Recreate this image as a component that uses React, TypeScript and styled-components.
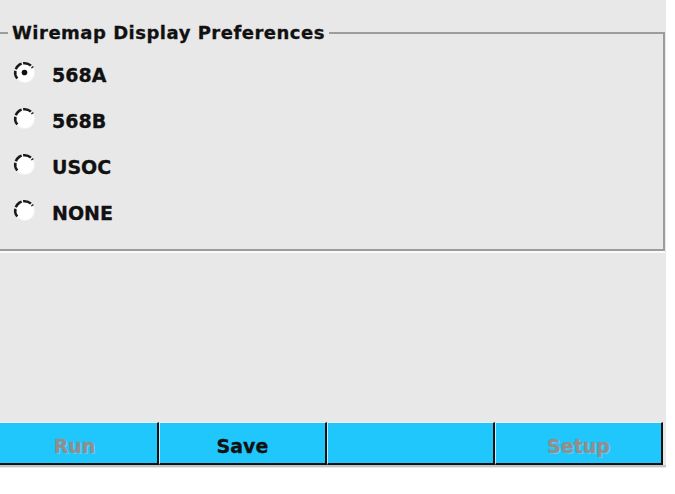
import React, { useState } from "react";
import styled, { createGlobalStyle } from "styled-components";

const GlobalStyle = createGlobalStyle`
  html, body {
    margin: 0;
    padding: 0;
    background: #ffffff;
  }
  body {
    font-family: "DejaVu Sans", "Liberation Sans", sans-serif;
    overflow: hidden;
  }
`;

const Screen = styled.div`
  width: 666px;
  height: 468px;
  background: #e8e8e8;
  display: flex;
  flex-direction: column;
  overflow: hidden;
`;

const Group = styled.fieldset`
  box-sizing: border-box;
  width: 685px;
  height: 229px;
  margin: 22px 0 0 -20px;
  padding: 8px 0 0 31px;
  border: 2px solid #9c9c9c;
  min-inline-size: 0;
  box-shadow: 0 2px 0 #fafafa;
`;

const Legend = styled.legend`
  margin-left: -5px;
  padding: 0 4px;
  font-size: 18px;
  line-height: 22px;
  font-weight: bold;
  letter-spacing: 0.5px;
  color: #111111;
  -webkit-text-stroke: 0.3px #111111;
`;

const OptionRow = styled.label`
  display: flex;
  align-items: center;
  height: 46px;
  gap: 16px;
  cursor: default;
`;

const RadioMark = styled.svg`
  width: 23px;
  height: 23px;
  flex: none;
  margin-bottom: 5px;
`;

const OptionText = styled.span`
  font-size: 19px;
  font-weight: bold;
  color: #111111;
  -webkit-text-stroke: 0.3px #111111;
`;

const ButtonBar = styled.div`
  margin: auto 0 3px -9px;
  display: grid;
  grid-template-columns: repeat(4, 168px);
  box-shadow: 0 2px 0 #c4c4c4;
`;

const BarButton = styled.button<{ $disabled?: boolean }>`
  box-sizing: border-box;
  height: 43px;
  margin: 0;
  padding: 5px 0 0;
  background: #1fc7fd;
  border-style: solid;
  border-width: 1px 2px 2px 1px;
  border-color: #e6f9ff #111111 #111111 #bdf0ff;
  font-family: "DejaVu Sans", "Liberation Sans", sans-serif;
  font-size: 19px;
  font-weight: bold;
  color: ${(p) => (p.$disabled ? "#8f8f8f" : "#111111")};
  -webkit-text-stroke: 0.3px ${(p) => (p.$disabled ? "#8f8f8f" : "#111111")};
  text-shadow: ${(p) =>
    p.$disabled ? "1px 1px 0 rgba(200, 240, 255, 0.35)" : "none"};
`;

function Radio({ checked }: { checked: boolean }) {
  return (
    <RadioMark viewBox="0 0 22 22">
      <circle cx="11" cy="11" r="10" fill="#f4f4f4" />
      <circle cx="11.5" cy="11.5" r="8.5" fill="#ffffff" />
      <path
        d="M4.1 16.8 A9 9 0 1 1 18.8 6.5"
        fill="none"
        stroke="#1a1a1a"
        strokeWidth="2.4"
        strokeDasharray="8 1.4"
      />
      {checked && <circle cx="11" cy="11" r="2.7" fill="#111111" />}
    </RadioMark>
  );
}

const options = ["568A", "568B", "USOC", "NONE"];
const buttons: { label: string; disabled?: boolean }[] = [
  { label: "Run", disabled: true },
  { label: "Save" },
  { label: "" },
  { label: "Setup", disabled: true },
];

export default function App() {
  const [selected, setSelected] = useState("568A");
  return (
    <>
      <GlobalStyle />
      <Screen>
        <Group>
          <Legend>Wiremap Display Preferences</Legend>
          {options.map((o) => (
            <OptionRow key={o} onClick={() => setSelected(o)}>
              <Radio checked={selected === o} />
              <OptionText>{o}</OptionText>
            </OptionRow>
          ))}
        </Group>
        <ButtonBar>
          {buttons.map((b, i) => (
            <BarButton key={i} $disabled={b.disabled}>
              {b.label}
            </BarButton>
          ))}
        </ButtonBar>
      </Screen>
    </>
  );
}
